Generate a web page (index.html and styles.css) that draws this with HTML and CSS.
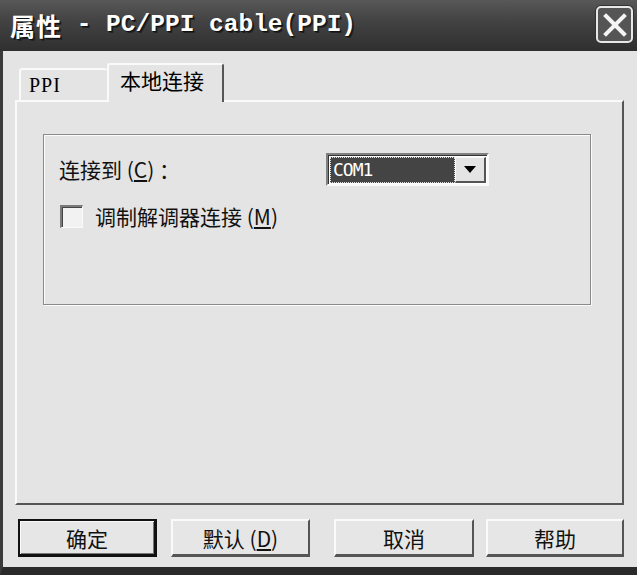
FILE: index.html
```html
<!DOCTYPE html>
<html>
<head>
<meta charset="utf-8">
<link rel="stylesheet" href="styles.css">
</head>
<body>
<div class="window">
  <div class="titlebar">
    <div class="title"><span class="cjk">属性</span><span class="mono"> - PC/PPI cable(PPI)</span></div>
    <div class="close">
      <svg width="26" height="26" viewBox="0 0 26 26"><path d="M4 4 L22 22 M22 4 L4 22" stroke="#f4f4f4" stroke-width="4" stroke-linecap="square"/></svg>
    </div>
  </div>
  <div class="content">
    <div class="tabs">
      <div class="tab inactive"><span class="mono-tab">PPI</span></div>
      <div class="tab active">本地连接</div>
    </div>
    <div class="panel">
      <div class="group">
        <div class="row">
          <div class="label">连接到 (<u>C</u>) ：</div>
          <div class="combo">
            <div class="field"><span>COM1</span></div>
            <div class="drop"><svg width="12" height="7" viewBox="0 0 12 7"><path d="M0 0 H12 L6 7 Z" fill="#000"/></svg></div>
          </div>
        </div>
        <div class="row check-row">
          <div class="checkbox"></div>
          <div class="check-label">调制解调器连接 (<u>M</u>)</div>
        </div>
      </div>
    </div>
    <div class="buttons">
      <div class="btn default b1">确定</div>
      <div class="btn b2">默认 (<u>D</u>)</div>
      <div class="btn b3">取消</div>
      <div class="btn b4">帮助</div>
    </div>
  </div>
</div>
</body>
</html>
```
FILE: styles.css
```css
html, body {
  margin: 0;
  padding: 0;
  background: #e4e4e4;
}
body {
  width: 637px;
  height: 575px;
  overflow: hidden;
  font-family: "Noto Sans CJK SC", "Liberation Sans", sans-serif;
}
.window {
  width: 637px;
  height: 575px;
  box-sizing: border-box;
  border-left: 3px solid #3a3a3a;
  border-bottom: 8px solid #2a2a2a;
  background: #e4e4e4;
  display: flex;
  flex-direction: column;
}
.titlebar {
  height: 51px;
  margin-left: -3px;
  background: linear-gradient(to bottom, #585858 0%, #434343 40%, #2f2f2f 100%);
  display: flex;
  align-items: center;
  justify-content: space-between;
  padding: 0 4px 0 10px;
  box-sizing: border-box;
}
.title {
  color: #fff;
  font-weight: bold;
  text-shadow: 1px 1px 0 #111, 2px 2px 0 #222;
  display: flex;
  align-items: center;
  white-space: pre;
  margin-top: -2px;
}
.title .cjk {
  font-family: "Noto Sans CJK SC", sans-serif;
  font-size: 25px;
  font-weight: bold;
  letter-spacing: 1px;
}
.title .mono {
  font-family: "Liberation Mono", monospace;
  font-size: 24.5px;
  font-weight: bold;
}
.close {
  width: 37px;
  height: 37px;
  box-sizing: border-box;
  border: 2px solid #e8e8e8;
  border-radius: 5px;
  background: #555;
  display: flex;
  align-items: center;
  justify-content: center;
  box-shadow: 0 0 0 1px #333;
  margin-top: -2px;
}
.content {
  flex: 1;
  display: flex;
  flex-direction: column;
  padding: 12px 13px 0 12px;
}
.tabs {
  display: flex;
  align-items: flex-end;
  height: 37px;
  padding-left: 4px;
  position: relative;
  z-index: 2;
}
.tab {
  box-sizing: border-box;
  color: #000;
}
.tab.inactive {
  width: 88px;
  height: 32px;
  border-top: 2px solid #fafafa;
  border-left: 2px solid #fafafa;
  border-radius: 3px 3px 0 0;
  padding-left: 8px;
  padding-top: 3px;
}
.mono-tab {
  font-family: "Liberation Serif", serif;
  font-size: 20px;
  letter-spacing: 1px;
}
.tab.active {
  width: 117px;
  height: 39px;
  margin-bottom: -2px;
  background: #e4e4e4;
  border-top: 2px solid #fafafa;
  border-left: 2px solid #fafafa;
  border-right: 2px solid #555;
  border-radius: 3px 3px 0 0;
  font-size: 21px;
  line-height: 28px;
  padding-left: 11px;
  padding-top: 1px;
}
.panel {
  height: 405px;
  box-sizing: border-box;
  border-top: 2px solid #fafafa;
  border-left: 2px solid #fafafa;
  border-right: 2px solid #555;
  border-bottom: 2px solid #555;
  padding: 32px 31px 0 26px;
}
.group {
  height: 171px;
  box-sizing: border-box;
  border: 1px solid #8a8a8a;
  box-shadow: 1px 1px 0 #fbfbfb, inset 1px 1px 0 #fbfbfb;
  padding: 18px 0 0 15px;
}
.row {
  display: flex;
  align-items: center;
}
.label {
  width: 267px;
  font-size: 21px;
  line-height: 33px;
  color: #111;
  white-space: pre;
}
u {
  text-decoration: underline;
  text-underline-offset: 2px;
}
.combo {
  width: 163px;
  height: 33px;
  box-sizing: border-box;
  border-top: 2px solid #808080;
  border-left: 2px solid #808080;
  border-right: 2px solid #fafafa;
  border-bottom: 2px solid #fafafa;
  box-shadow: inset 1px 1px 0 #333;
  display: flex;
  padding: 2px 1px 1px 2px;
  background: #fff;
}
.field {
  flex: 1;
  background: #444;
  border: 1px dotted #ddd;
  color: #fff;
  font-family: "DejaVu Sans Mono", monospace;
  font-size: 18px;
  line-height: 23px;
  padding-left: 2px;
  letter-spacing: -1px;
}
.drop {
  width: 31px;
  box-sizing: border-box;
  background: #e4e4e4;
  border-top: 1px solid #fafafa;
  border-left: 1px solid #fafafa;
  border-right: 2px solid #555;
  border-bottom: 2px solid #555;
  display: flex;
  align-items: center;
  justify-content: center;
}
.check-row {
  margin-top: 17px;
  padding-left: 1px;
}
.checkbox {
  width: 23px;
  height: 23px;
  box-sizing: border-box;
  border-top: 2px solid #7a7a7a;
  border-left: 2px solid #7a7a7a;
  border-right: 1px solid #fafafa;
  border-bottom: 1px solid #fafafa;
  box-shadow: inset 1px 1px 0 #444;
  background: #f2f2f2;
}
.check-label {
  margin-left: 12px;
  font-size: 21px;
  line-height: 26px;
  color: #111;
  white-space: pre;
}
.buttons {
  display: flex;
  margin-top: 14px;
  height: 38px;
  margin-left: 3px;
}
.btn {
  box-sizing: border-box;
  height: 38px;
  display: flex;
  align-items: center;
  justify-content: center;
  font-size: 21px;
  color: #111;
  background: #e6e6e6;
  border-top: 2px solid #fafafa;
  border-left: 2px solid #fafafa;
  border-right: 2px solid #555;
  border-bottom: 3px solid #555;
  white-space: pre;
}
.btn.default {
  border: 2px solid #111;
  border-bottom-width: 3px;
  border-right-width: 3px;
  box-shadow: inset 1px 1px 0 #fafafa, inset -1px -1px 0 #777;
}
.b1 { width: 140px; }
.b2 { width: 140px; margin-left: 14px; }
.b3 { width: 141px; margin-left: 24px; }
.b4 { width: 139px; margin-left: 12px; }
```
